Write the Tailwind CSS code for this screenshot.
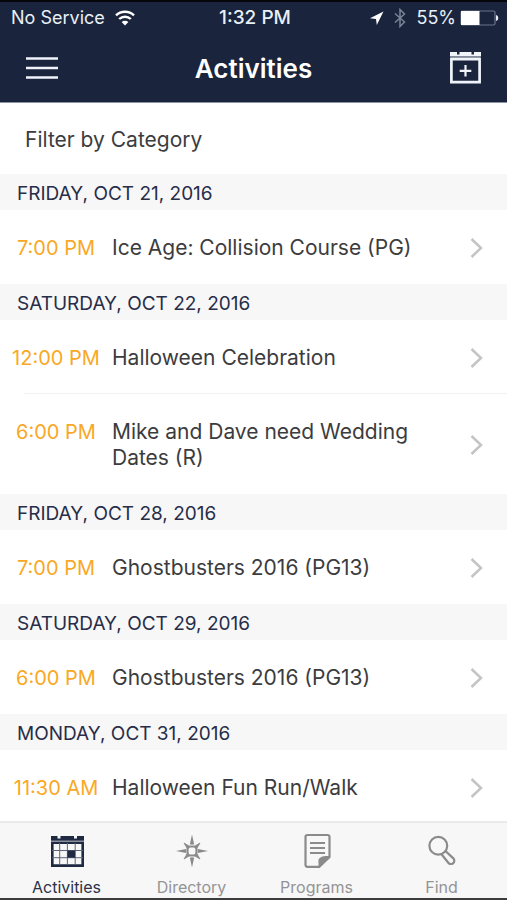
<!DOCTYPE html>
<html lang="en">
<head>
<meta charset="utf-8">
<meta name="viewport" content="width=device-width, initial-scale=1">
<title>Activities</title>
<script src="https://cdn.jsdelivr.net/npm/@tailwindcss/browser@4"></script>
</head>
<body class="flex h-screen flex-col bg-white font-['Inter',sans-serif] text-[#3c3c3e]">

<header class="border-t-2 border-b border-t-[#05070c] border-b-[#8a93a0] bg-[#1a243c] text-white">
  <div class="grid h-8 grid-cols-3 items-center pr-2 pl-[11px] text-lg leading-8 text-[#e8f0f8]">
    <div class="flex items-center gap-[10px] whitespace-nowrap">
      <span>No Service</span>
      <svg class="h-4 w-5 shrink-0" viewBox="0 0 20 16" fill="none" stroke="#fff" stroke-width="2.4" aria-label="Wi-Fi">
        <path d="M1 5.400C6 .6 14 .6 19 5.400M4.200 9C7.500 5.900 12.500 5.900 15.800 9"/>
        <path d="M10 15.500 6.600 12C8.600 10.200 11.400 10.200 13.400 12Z" fill="#fff" stroke="none"/>
      </svg>
    </div>
    <time class="text-center text-[19px] font-medium">1:32 PM</time>
    <div class="flex items-center justify-end gap-[6px]">
      <svg class="h-[14px] w-[14px] shrink-0" viewBox="0 0 14 14" fill="#fff" aria-label="Location"><path d="M13.500.5 0 7.300l6 .7.800 6Z"/></svg>
      <svg class="mx-1 h-5 w-3 shrink-0" viewBox="0 0 12 20" fill="none" stroke="#7b8496" stroke-width="1.500" aria-label="Bluetooth"><path d="M1 5.500 10.500 14 6 18.500v-17L10.500 6 1 14.500"/></svg>
      <span class="-mr-0.5">55%</span>
      <svg class="h-4 w-[39px] shrink-0" viewBox="0 0 39 16" aria-label="Battery">
        <rect x="1" y="1" width="34" height="14" rx="1.500" fill="none" stroke="#69748a" stroke-width="1.200"/>
        <path d="M1 1H19.500V15H1Z" fill="#fff"/>
        <path d="M36 5c3 .5 3 5.500 0 6Z" fill="#e8edf4"/>
      </svg>
    </div>
  </div>
  <div class="grid h-[68px] grid-cols-3 items-center px-[26px]">
    <button type="button" aria-label="Menu" class="justify-self-start">
      <svg class="h-6 w-8" viewBox="0 0 32 24" stroke="#f0f4fa" stroke-width="2.500"><path d="M0 2.500h32M0 12h32M0 21.500h32"/></svg>
    </button>
    <h1 class="text-center text-[26px] font-semibold">Activities</h1>
    <button type="button" aria-label="Add to calendar" class="justify-self-end">
      <svg class="h-8 w-[31px]" viewBox="0 0 31 32" fill="none" stroke="#f0f4fa">
        <path d="M0 0h7v2.500h2.500V0h12v2.500h2.500V0h7v4.500H0Z" fill="#f0f4fa" stroke="none"/>
        <path d="M0 5.200H31" stroke="#7f889c" stroke-width="1.400"/>
        <path d="M1.400 6V30.200H29.600V6M1 7.200H30" stroke-width="2.700"/>
        <path d="M9.700 18.800h11.600M15.500 13v11.600" stroke-width="2.200"/>
      </svg>
    </button>
  </div>
</header>

<main class="min-h-0 flex-1 overflow-y-auto [scrollbar-width:none]">
  <button type="button" class="block h-[71px] w-full px-[25px] pt-0.5 text-left text-[21px]">Filter by Category</button>

  <section>
    <h2 class="h-9 bg-[#f7f7f8] px-[17px] text-[19px] leading-[39px] text-[#282d48]">FRIDAY, OCT 21, 2016</h2>
    <a href="#" class="flex items-center pt-[25px] pr-6 pb-[23px]">
      <time class="w-28 shrink-0 self-start text-center text-[20px] leading-[26px] text-[#f9a825]">7:00 PM</time>
      <span class="flex-1 text-[21px] leading-[26px]">Ice Age: Collision Course (PG)</span>
      <svg class="ml-8 h-[22px] w-[13px] shrink-0" viewBox="0 0 13 22" fill="none" stroke="#c4c4c6" stroke-width="2.500" aria-hidden="true"><path d="M1.500 2 11 11 1.500 20"/></svg>
    </a>
  </section>

  <section>
    <h2 class="h-9 bg-[#f7f7f8] px-[17px] text-[19px] leading-[39px] text-[#282d48]">SATURDAY, OCT 22, 2016</h2>
    <a href="#" class="flex items-center pt-[25px] pr-6 pb-[23px]">
      <time class="w-28 shrink-0 self-start text-center text-[20px] leading-[26px] text-[#f9a825]">12:00 PM</time>
      <span class="flex-1 text-[21px] leading-[26px]">Halloween Celebration</span>
      <svg class="ml-8 h-[22px] w-[13px] shrink-0" viewBox="0 0 13 22" fill="none" stroke="#c4c4c6" stroke-width="2.500" aria-hidden="true"><path d="M1.500 2 11 11 1.500 20"/></svg>
    </a>
    <hr class="-mt-px ml-6 border-[#f1f1f2]">
    <a href="#" class="flex items-center pt-[25px] pr-6 pb-[23px]">
      <time class="w-28 shrink-0 self-start text-center text-[20px] leading-[26px] text-[#f9a825]">6:00 PM</time>
      <span class="flex-1 text-[21px] leading-[26px]">Mike and Dave need Wedding Dates (R)</span>
      <svg class="ml-8 h-[22px] w-[13px] shrink-0" viewBox="0 0 13 22" fill="none" stroke="#c4c4c6" stroke-width="2.500" aria-hidden="true"><path d="M1.500 2 11 11 1.500 20"/></svg>
    </a>
  </section>

  <section>
    <h2 class="h-9 bg-[#f7f7f8] px-[17px] text-[19px] leading-[39px] text-[#282d48]">FRIDAY, OCT 28, 2016</h2>
    <a href="#" class="flex items-center pt-[25px] pr-6 pb-[23px]">
      <time class="w-28 shrink-0 self-start text-center text-[20px] leading-[26px] text-[#f9a825]">7:00 PM</time>
      <span class="flex-1 text-[21px] leading-[26px]">Ghostbusters 2016 (PG13)</span>
      <svg class="ml-8 h-[22px] w-[13px] shrink-0" viewBox="0 0 13 22" fill="none" stroke="#c4c4c6" stroke-width="2.500" aria-hidden="true"><path d="M1.500 2 11 11 1.500 20"/></svg>
    </a>
  </section>

  <section>
    <h2 class="h-9 bg-[#f7f7f8] px-[17px] text-[19px] leading-[39px] text-[#282d48]">SATURDAY, OCT 29, 2016</h2>
    <a href="#" class="flex items-center pt-[25px] pr-6 pb-[23px]">
      <time class="w-28 shrink-0 self-start text-center text-[20px] leading-[26px] text-[#f9a825]">6:00 PM</time>
      <span class="flex-1 text-[21px] leading-[26px]">Ghostbusters 2016 (PG13)</span>
      <svg class="ml-8 h-[22px] w-[13px] shrink-0" viewBox="0 0 13 22" fill="none" stroke="#c4c4c6" stroke-width="2.500" aria-hidden="true"><path d="M1.500 2 11 11 1.500 20"/></svg>
    </a>
  </section>

  <section>
    <h2 class="h-9 bg-[#f7f7f8] px-[17px] text-[19px] leading-[39px] text-[#282d48]">MONDAY, OCT 31, 2016</h2>
    <a href="#" class="flex items-center pt-[25px] pr-6 pb-[23px]">
      <time class="w-28 shrink-0 self-start text-center text-[20px] leading-[26px] text-[#f9a825]">11:30 AM</time>
      <span class="flex-1 text-[21px] leading-[26px]">Halloween Fun Run/Walk</span>
      <svg class="ml-8 h-[22px] w-[13px] shrink-0" viewBox="0 0 13 22" fill="none" stroke="#c4c4c6" stroke-width="2.500" aria-hidden="true"><path d="M1.500 2 11 11 1.500 20"/></svg>
    </a>
  </section>
</main>

<nav class="grid grid-cols-4 border-t-2 border-b-2 border-t-[#e9eaea] border-b-[#3c3c3c] bg-[#f7f7f7] pt-[10px] pr-[3px] pl-1 text-[16px] leading-5 text-[#949496]">
  <a href="#" aria-current="page" class="flex flex-col items-center gap-2 pb-px text-[#2b3249]">
    <svg class="h-9 w-9" viewBox="0 0 36 36" fill="none" stroke="#1f2942" aria-hidden="true">
      <path d="M2 3h6.500v2.500h3V3h13.500v2.500h3V3H35v4.800H2Z" fill="#1f2942" stroke="none"/>
      <path d="M3.300 9V32.700H33.700V9" stroke-width="2.600"/>
      <path d="M2 9.800H35M2 32.800H35" stroke-width="2.400"/>
      <path d="M10.700 10v22M18.400 10v22M26.200 10v22M3 17.500h31M3 24.700h31" stroke-width="1" stroke="#5e667a"/>
      <path d="M18.400 17.500h7.800v7.200h-7.800Z" fill="#1f2942" stroke="none"/>
    </svg>
    <span>Activities</span>
  </a>
  <a href="#" class="flex flex-col items-center gap-2 pb-px">
    <svg class="h-9 w-9" viewBox="0 1.500 36 36" fill="#8b8b8b" aria-hidden="true">
      <path d="M18 3l2.200 10h-4.400ZM18 36l2.200-10h-4.400ZM2 19.500l10-2v4ZM34 19.500l-10-2v4Z"/>
      <path d="M10 11.500 15 14.500 13 16.500ZM26 11.500 21 14.500 23 16.500ZM10 27.500l5-3-2-2ZM26 27.500l-5-3 2-2Z" stroke="#8b8b8b" stroke-width=".9"/>
      <rect x="13.500" y="15" width="9" height="9" rx="2.800" fill="none" stroke="#8b8b8b" stroke-width="2.200"/>
    </svg>
    <span>Directory</span>
  </a>
  <a href="#" class="flex flex-col items-center gap-2 pb-px">
    <svg class="h-9 w-9" viewBox="0 1 36 36" fill="none" stroke="#8b8b8b" stroke-width="2.200" aria-hidden="true">
      <path d="M19 34.800H8.500Q6.500 34.800 6.500 32.800V5Q6.500 3 8.500 3H28.500Q30.500 3 30.500 5V25L20 34.800Z"/>
      <path d="M11 11H26M11 16H26M11 21H26"/>
      <path d="M18.500 35.500c2-2.500.5-5 1-7.500C20.300 25 24 23.500 31 24v1.500L20.500 36Z" fill="#8b8b8b" stroke="none"/>
    </svg>
    <span>Programs</span>
  </a>
  <a href="#" class="flex flex-col items-center gap-2 pb-px">
    <svg class="h-9 w-9" viewBox="0 0 36 36" fill="none" stroke="#8b8b8b" stroke-width="2.200" aria-hidden="true">
      <circle cx="14.300" cy="12.700" r="8.900"/>
      <path d="M17.500 21.300 24.300 29.700a3.300 3.300 0 0 0 5.300-4.100L21.700 18.200"/>
    </svg>
    <span>Find</span>
  </a>
</nav>
</body>
</html>
